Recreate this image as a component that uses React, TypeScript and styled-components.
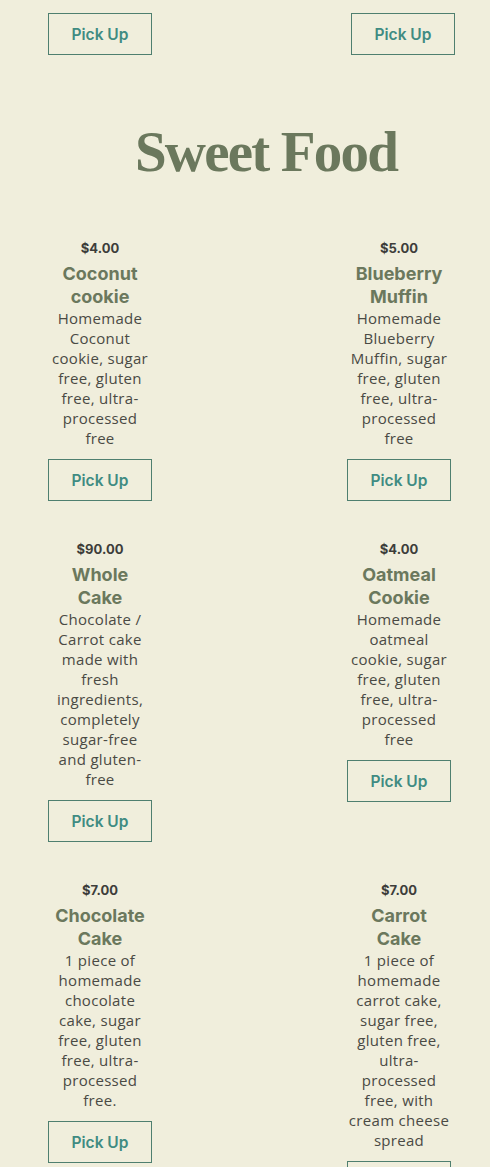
import React from 'react';
import styled, { createGlobalStyle } from 'styled-components';

const GlobalStyle = createGlobalStyle`
  html, body {
    margin: 0;
    padding: 0;
    background: #f0eedc;
  }
  body {
    font-family: 'Open Sans', 'DejaVu Sans', sans-serif;
  }
`;

const Page = styled.div`
  width: 490px;
  min-height: 1167px;
  background: #f0eedc;
  overflow: hidden;
  padding-top: 13px;
`;

const Grid = styled.div<{ $right?: number }>`
  display: grid;
  grid-template-columns: 104px 104px;
  justify-content: space-between;
  row-gap: 40px;
  padding: 0 ${(p) => p.$right ?? 39}px 0 48px;
`;

const Title = styled.h2`
  margin: 62px 0 53px;
  padding-left: 42px;
  text-align: center;
  font-family: 'Liberation Serif', 'DejaVu Serif', serif;
  font-weight: 700;
  font-size: 57px;
  line-height: 70px;
  letter-spacing: -1.8px;
  color: #6b785d;
`;

const Card = styled.div`
  display: flex;
  flex-direction: column;
  align-items: center;
  text-align: center;
  white-space: nowrap;
`;

const Price = styled.div`
  font-family: Inter, 'Open Sans', sans-serif;
  font-weight: 700;
  font-size: 13px;
  line-height: 16px;
  color: #3d3d3a;
  margin-bottom: 6px;
`;

const Name = styled.div`
  font-family: Inter, 'Open Sans', sans-serif;
  font-weight: 700;
  font-size: 18px;
  line-height: 23px;
  color: #6b785d;
`;

const Desc = styled.div`
  font-family: 'Open Sans', sans-serif;
  font-size: 15px;
  line-height: 20px;
  letter-spacing: 0.3px;
  color: #4a4a44;
`;

const PickButton = styled.button<{ $flush?: boolean }>`
  box-sizing: border-box;
  width: 104px;
  height: 42px;
  margin-top: ${(p) => (p.$flush ? 0 : 11)}px;
  background: transparent;
  border: 1px solid #4f7f6f;
  font-family: Inter, 'Open Sans', sans-serif;
  font-weight: 600;
  font-size: 15.5px;
  color: #3f8b82;
  cursor: pointer;
  padding: 0;
`;

type Item = {
  price: string;
  name: string[];
  desc: string[];
};

const ITEMS: Item[] = [
  {
    price: '$4.00',
    name: ['Coconut', 'cookie'],
    desc: ['Homemade', 'Coconut', 'cookie, sugar', 'free, gluten', 'free, ultra-', 'processed', 'free'],
  },
  {
    price: '$5.00',
    name: ['Blueberry', 'Muffin'],
    desc: ['Homemade', 'Blueberry', 'Muffin, sugar', 'free, gluten', 'free, ultra-', 'processed', 'free'],
  },
  {
    price: '$90.00',
    name: ['Whole', 'Cake'],
    desc: [
      'Chocolate /',
      'Carrot cake',
      'made with',
      'fresh',
      'ingredients,',
      'completely',
      'sugar-free',
      'and gluten-',
      'free',
    ],
  },
  {
    price: '$4.00',
    name: ['Oatmeal', 'Cookie'],
    desc: ['Homemade', 'oatmeal', 'cookie, sugar', 'free, gluten', 'free, ultra-', 'processed', 'free'],
  },
  {
    price: '$7.00',
    name: ['Chocolate', 'Cake'],
    desc: ['1 piece of', 'homemade', 'chocolate', 'cake, sugar', 'free, gluten', 'free, ultra-', 'processed', 'free.'],
  },
  {
    price: '$7.00',
    name: ['Carrot', 'Cake'],
    desc: [
      '1 piece of',
      'homemade',
      'carrot cake,',
      'sugar free,',
      'gluten free,',
      'ultra-',
      'processed',
      'free, with',
      'cream cheese',
      'spread',
    ],
  },
];

const Lines = ({ lines }: { lines: string[] }) => (
  <>
    {lines.map((l, i) => (
      <React.Fragment key={i}>
        {l}
        {i < lines.length - 1 && <br />}
      </React.Fragment>
    ))}
  </>
);

const App = () => {
  return (
    <Page>
      <GlobalStyle />
      <Grid $right={35}>
        <Card>
          <PickButton $flush>Pick Up</PickButton>
        </Card>
        <Card>
          <PickButton $flush>Pick Up</PickButton>
        </Card>
      </Grid>
      <Title>Sweet Food</Title>
      <Grid>
        {ITEMS.map((item, i) => (
          <Card key={i}>
            <Price>{item.price}</Price>
            <Name>
              <Lines lines={item.name} />
            </Name>
            <Desc>
              <Lines lines={item.desc} />
            </Desc>
            <PickButton>Pick Up</PickButton>
          </Card>
        ))}
      </Grid>
    </Page>
  );
};

export default App;
